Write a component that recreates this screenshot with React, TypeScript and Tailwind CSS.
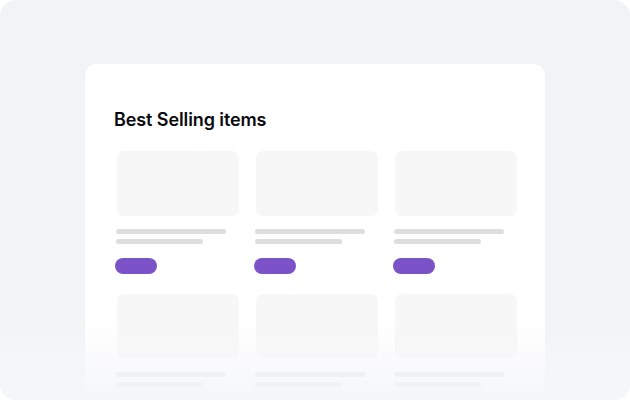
const ITEMS = [0, 1, 2, 3, 4, 5]

function ItemSkeleton() {
  return (
    <div className="flex flex-col">
      <div className="ml-[2px] h-[65px] w-[122px] rounded-[7px] bg-[#f7f7f7]" />
      <div className="ml-[1px] mt-[13px] h-[5px] w-[110px] rounded-full bg-[#dedede]" />
      <div className="ml-[1px] mt-[5px] h-[5px] w-[87px] rounded-full bg-[#dedede]" />
      <div className="mt-[14px] h-[16px] w-[42px] rounded-full bg-[#7c52c9]" />
    </div>
  )
}

export default function App() {
  return (
    <div
      className="relative h-[400px] w-[630px] overflow-hidden rounded-[16px] bg-[#f2f3f5]"
      style={{ fontFamily: 'Inter, "Noto Sans", sans-serif' }}
    >
      <div className="ml-[85px] mt-[64px] h-[400px] w-[460px] rounded-[11px] bg-white px-[29px] pt-[45px] shadow-[0_0_2px_rgba(0,0,0,0.04)]">
        <h2 className="text-[18px] font-semibold leading-[22px] tracking-[-0.1px] text-[#0b0b0f]">
          Best Selling items
        </h2>
        <div className="mt-[20px] grid grid-cols-[124px_124px_124px] gap-x-[15px] gap-y-[20px] pl-[1px]">
          {ITEMS.map((i) => (
            <ItemSkeleton key={i} />
          ))}
        </div>
      </div>
      {/* bottom fade */}
      <div className="pointer-events-none absolute inset-x-0 bottom-0 h-[80px] bg-gradient-to-b from-[#f7f8fa]/0 via-[#f7f8fa]/60 to-[#f5f6f8]" />
    </div>
  )
}
